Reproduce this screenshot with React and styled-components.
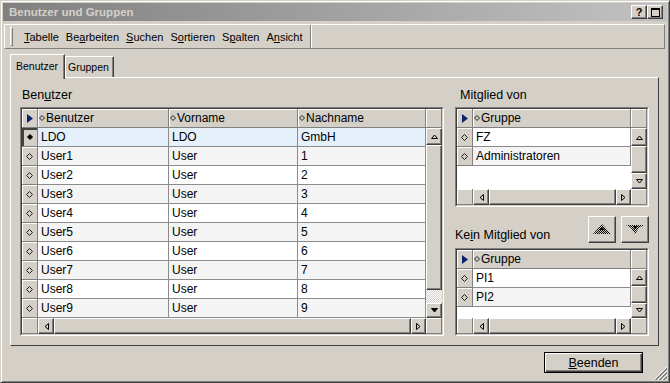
import React from "react";
import styled, { createGlobalStyle } from "styled-components";

const FACE = "#d4d0c8";
const SHADOW = "#808080";
const DARK = "#404040";
const SELECTED = "#e5f0fb";
const STRIPE = "#f4f4f4";

const GlobalStyle = createGlobalStyle`
  html, body {
    margin: 0;
    padding: 0;
    background: ${FACE};
  }
  body {
    font-family: "Liberation Sans", Arial, sans-serif;
    color: #000;
  }
  * {
    box-sizing: border-box;
  }
`;

const Window = styled.div`
  width: 670px;
  height: 383px;
  display: flex;
  flex-direction: column;
  background: ${FACE};
  border: 1px solid;
  border-color: ${FACE} ${DARK} ${DARK} ${FACE};
  box-shadow: inset 1px 1px #fff, inset -1px -1px ${SHADOW};
  padding: 2px;
`;

const TitleBar = styled.div`
  flex: none;
  height: 18px;
  display: flex;
  align-items: center;
  justify-content: space-between;
  padding: 0 4px 0 6px;
  background: linear-gradient(to right, #808080, #c2c2c2);
`;

const TitleText = styled.span`
  font-size: 11.5px;
  font-weight: bold;
  color: ${FACE};
`;

const CaptionButtons = styled.div`
  display: flex;
`;

const CaptionButton = styled.div`
  width: 16px;
  height: 14px;
  display: flex;
  align-items: center;
  justify-content: center;
  background: ${FACE};
  border-top: 1px solid #fff;
  border-left: 1px solid #fff;
  border-right: 1px solid ${DARK};
  border-bottom: 1px solid ${DARK};
  box-shadow: inset -1px -1px ${SHADOW};
  font-size: 11px;
  font-weight: bold;
  line-height: 1;
`;

const MenuBar = styled.div`
  flex: none;
  height: 25px;
  margin: 3px 2px 0 1px;
  display: flex;
  border: 1px solid;
  border-color: #fff ${SHADOW} ${SHADOW} #fff;
`;

const ToolBand = styled.div`
  display: flex;
  align-items: center;
  gap: 7px;
  padding: 0 7px 0 5px;
  border-right: 1px solid ${SHADOW};
  box-shadow: 1px 0 #fff;
`;

const Grip = styled.div`
  width: 3px;
  height: 19px;
  margin-right: 4px;
  border-left: 1px solid #fff;
  border-top: 1px solid #fff;
  border-right: 1px solid ${SHADOW};
  border-bottom: 1px solid ${SHADOW};
`;

const MenuItem = styled.span`
  font-size: 11px;
  white-space: nowrap;
`;

const TabStrip = styled.div`
  flex: none;
  height: 23px;
  margin: 5px 0 0 7px;
  display: flex;
  align-items: flex-end;
  position: relative;
  z-index: 1;
`;

const Tab = styled.div`
  height: ${(p) => (p.$active ? 25 : 21)}px;
  margin-bottom: ${(p) => (p.$active ? -2 : 0)}px;
  padding: ${(p) => (p.$active ? "0 6px 2px 5px" : "0 4px 0 2px")};
  display: flex;
  align-items: center;
  font-size: 10.5px;
  background: ${FACE};
  border-top: 1px solid #fff;
  border-left: 1px solid #fff;
  border-right: 1px solid ${DARK};
  box-shadow: inset -1px 0 ${SHADOW};
`;

const Panel = styled.div`
  flex: none;
  height: 269px;
  margin: 0 8px 0 7px;
  padding: 9px;
  display: flex;
  gap: 11px;
  border: 1px solid;
  border-color: #fff ${DARK} ${DARK} #fff;
`;

const Section = styled.div`
  width: ${(p) => p.$w}px;
  flex: none;
  display: flex;
  flex-direction: column;
`;

const GroupLabel = styled.div`
  height: 20px;
  flex: none;
  padding-left: ${(p) => p.$indent}px;
  font-size: 12.5px;
  line-height: 16px;
  white-space: nowrap;
`;

const MoveRow = styled.div`
  height: 41px;
  flex: none;
  display: flex;
  align-items: flex-end;
  padding-bottom: 5px;
  gap: 5px;
`;

const MoveLabel = styled.div`
  flex: 1;
  font-size: 12.5px;
  line-height: 16px;
  white-space: nowrap;
`;

const MoveButton = styled.div`
  width: 28px;
  height: 27px;
  display: flex;
  align-items: center;
  justify-content: center;
  background: ${FACE};
  border-top: 1px solid #fff;
  border-left: 1px solid #fff;
  border-right: 1px solid ${DARK};
  border-bottom: 1px solid ${DARK};
  box-shadow: inset -1px -1px ${SHADOW};
`;

const GridFrame = styled.div`
  width: ${(p) => p.$w}px;
  height: ${(p) => p.$h}px;
  flex: none;
  display: flex;
  border: 1px solid;
  border-color: ${SHADOW} #fff #fff ${SHADOW};
`;

const GridBox = styled.div`
  flex: 1;
  min-width: 0;
  display: flex;
  flex-direction: column;
  border: 1px solid;
  border-color: ${DARK} ${FACE} ${FACE} ${DARK};
  background: ${FACE};
`;

const GridBody = styled.div`
  flex: 1;
  min-height: 0;
  display: flex;
`;

const Table = styled.div`
  flex: 1;
  min-width: 0;
  display: flex;
  flex-direction: column;
  background: #fff;
  overflow: hidden;
`;

const Row = styled.div`
  flex: none;
  height: 19px;
  display: flex;
  background: ${(p) => p.$bg};
`;

const Indicator = styled.div`
  width: 16px;
  flex: none;
  display: flex;
  align-items: center;
  justify-content: center;
  background: ${FACE};
  border-right: 1px solid ${SHADOW};
  border-bottom: 1px solid ${SHADOW};
  box-shadow: ${(p) =>
    p.$current ? `inset 2px 2px ${DARK}` : "inset 1px 1px #fff"};
`;

const HeaderCell = styled.div`
  width: ${(p) => p.$w}px;
  flex: none;
  display: flex;
  align-items: center;
  gap: 1px;
  padding-left: 1px;
  font-size: 12px;
  background: ${FACE};
  border-right: 1px solid ${SHADOW};
  border-bottom: 1px solid ${SHADOW};
  box-shadow: inset 1px 1px #fff;
  white-space: nowrap;
  overflow: hidden;
`;

const Cell = styled.div`
  width: ${(p) => p.$w}px;
  flex: none;
  padding-left: 3px;
  font-size: 12px;
  line-height: 18px;
  border-right: 1px solid #8c8c8c;
  border-bottom: 1px solid #8c8c8c;
  white-space: nowrap;
  overflow: hidden;
`;

const VScroll = styled.div`
  width: 16px;
  flex: none;
  display: flex;
  flex-direction: column;
  background: ${FACE};
`;

const HScroll = styled.div`
  height: 16px;
  flex: none;
  display: flex;
  background: ${FACE};
`;

const Corner = styled.div`
  flex: none;
  width: ${(p) => (p.$w ? `${p.$w}px` : "auto")};
  height: ${(p) => (p.$h ? `${p.$h}px` : "auto")};
  background: ${FACE};
  border-right: 1px solid ${SHADOW};
  border-bottom: 1px solid ${SHADOW};
  box-shadow: inset 1px 1px #fff;
`;

const ScrollButton = styled.div`
  flex: none;
  width: ${(p) => (p.$w ? `${p.$w}px` : "auto")};
  height: ${(p) => (p.$h ? `${p.$h}px` : "auto")};
  display: flex;
  align-items: center;
  justify-content: center;
  background: ${FACE};
  border-top: 1px solid #fff;
  border-left: 1px solid #fff;
  border-right: 1px solid ${DARK};
  border-bottom: 1px solid ${DARK};
  box-shadow: inset -1px -1px ${SHADOW};
`;

const Thumb = styled.div`
  flex: 1;
  background: ${FACE};
  border-top: 1px solid #fff;
  border-left: 1px solid #fff;
  border-right: 1px solid ${DARK};
  border-bottom: 1px solid ${DARK};
  box-shadow: inset -1px -1px ${SHADOW};
`;

const Track = styled.div`
  flex: none;
  height: ${(p) => p.$h}px;
  background: repeating-conic-gradient(${FACE} 0 25%, #fff 0 50%) 0 0 / 2px
    2px;
`;

const Footer = styled.div`
  flex: 1;
  display: flex;
  justify-content: flex-end;
  align-items: flex-start;
`;

const PushButton = styled.div`
  width: 99px;
  height: 21px;
  margin-top: 6px;
  display: flex;
  align-items: center;
  justify-content: center;
  font-size: 12.5px;
  background: ${FACE};
  border: 1px solid #000;
  box-shadow: inset 1px 1px #fff, inset -1px -1px ${DARK},
    inset -2px -2px ${SHADOW};
`;

const SizeGrip = styled.div`
  align-self: flex-end;
  margin-left: 11px;
  width: 13px;
  height: 13px;
  display: flex;
`;

function Diamond({ filled, size = 7 }) {
  const h = size / 2;
  return (
    <svg width={size} height={size} viewBox={`0 0 ${size} ${size}`}>
      <path
        d={`M${h} 0.5 L${size - 0.5} ${h} L${h} ${size - 0.5} L0.5 ${h} Z`}
        fill={filled ? "#000" : "none"}
        stroke={filled ? "#000" : "#202020"}
        strokeWidth="1"
      />
    </svg>
  );
}

function HeadArrow() {
  return (
    <svg width="6" height="9" viewBox="0 0 6 9">
      <path d="M0 0 L6 4.5 L0 9 Z" fill="#0a246a" />
    </svg>
  );
}

const arrowPaths = {
  up: "M0.5 4.5 L3.5 1 L6.5 4.5 Z",
  down: "M0.5 0.5 L3.5 4 L6.5 0.5 Z",
  left: "M4.5 0.5 L1 3.5 L4.5 6.5 Z",
  right: "M0.5 0.5 L4 3.5 L0.5 6.5 Z",
};

function Arrow({ dir, filled }) {
  const horiz = dir === "left" || dir === "right";
  const w = horiz ? 5 : 7;
  const h = horiz ? 7 : 5;
  return (
    <svg width={w} height={h} viewBox={`0 0 ${w} ${h}`}>
      <path
        d={arrowPaths[dir]}
        fill={filled ? "#000" : "none"}
        stroke="#000"
        strokeWidth="1"
      />
    </svg>
  );
}

function MoveIcon({ up }) {
  const id = up ? "dither-up" : "dither-down";
  return (
    <svg width="20" height="11" viewBox="0 0 20 11">
      <defs>
        <pattern id={id} width="2" height="2" patternUnits="userSpaceOnUse">
          <rect width="1" height="1" fill="#000" />
          <rect x="1" y="1" width="1" height="1" fill="#000" />
        </pattern>
      </defs>
      <path
        d={up ? "M10 0 L19 10 L1 10 Z" : "M1 1 H19 L14 4 L10 10 L6 4 Z"}
        fill={`url(#${id})`}
      />
      <path
        d={up ? "M10 3 L13 6 L7 6 Z" : "M8 2 H12 L10 5 Z"}
        fill="#000"
      />
    </svg>
  );
}

function GripIcon() {
  return (
    <svg width="13" height="13" viewBox="0 0 13 13">
      {[0, 4, 8].map((o) => (
        <g key={o}>
          <line x1={13} y1={o} x2={o} y2={13} stroke="#fff" />
          <line x1={13} y1={o + 1} x2={o + 1} y2={13} stroke={SHADOW} />
          <line x1={13} y1={o + 2} x2={o + 2} y2={13} stroke={SHADOW} />
        </g>
      ))}
    </svg>
  );
}

function DataGrid({ width, height, columns, rows, selected, scroll }) {
  return (
    <GridFrame $w={width} $h={height}>
      <GridBox>
        <GridBody>
          <Table>
            <Row $bg={FACE}>
              <Indicator>
                <HeadArrow />
              </Indicator>
              {columns.map((col) => (
                <HeaderCell key={col.title} $w={col.width}>
                  <Diamond size={6} />
                  {col.title}
                </HeaderCell>
              ))}
            </Row>
            {rows.map((row, i) => {
              const isCurrent = i === selected;
              const bg = isCurrent ? SELECTED : i % 2 ? STRIPE : "#fff";
              return (
                <Row key={i} $bg={bg}>
                  <Indicator $current={isCurrent}>
                    <Diamond filled={isCurrent} size={isCurrent ? 6 : 7} />
                  </Indicator>
                  {row.map((value, j) => (
                    <Cell key={j} $w={columns[j].width}>
                      {value}
                    </Cell>
                  ))}
                </Row>
              );
            })}
          </Table>
          <VScroll>
            <Corner $h={19} />
            <ScrollButton $h={scroll.up}>
              <Arrow dir="up" />
            </ScrollButton>
            <Thumb />
            {scroll.track ? <Track $h={scroll.track} /> : null}
            <ScrollButton $h={scroll.down}>
              <Arrow dir="down" filled={scroll.filledDown} />
            </ScrollButton>
          </VScroll>
        </GridBody>
        <HScroll>
          <Corner $w={16} />
          <ScrollButton $w={16}>
            <Arrow dir="left" />
          </ScrollButton>
          <Thumb />
          <ScrollButton $w={15}>
            <Arrow dir="right" />
          </ScrollButton>
          <Corner $w={16} />
        </HScroll>
      </GridBox>
    </GridFrame>
  );
}

const userColumns = [
  { title: "Benutzer", width: 131 },
  { title: "Vorname", width: 129 },
  { title: "Nachname", width: 128 },
];

const users = [
  ["LDO", "LDO", "GmbH"],
  ...[1, 2, 3, 4, 5, 6, 7, 8, 9].map((n) => [`User${n}`, "User", `${n}`]),
];

const groupColumns = [{ title: "Gruppe", width: 158 }];

const memberOf = [["FZ"], ["Administratoren"]];
const notMemberOf = [["PI1"], ["PI2"]];

const menus = [
  ["", "T", "abelle"],
  ["Be", "a", "rbeiten"],
  ["", "S", "uchen"],
  ["S", "o", "rtieren"],
  ["S", "p", "alten"],
  ["A", "n", "sicht"],
];

export default function App() {
  return (
    <>
      <GlobalStyle />
      <Window>
        <TitleBar>
          <TitleText>Benutzer und Gruppen</TitleText>
          <CaptionButtons>
            <CaptionButton>?</CaptionButton>
            <CaptionButton>
              <svg width="9" height="9" viewBox="0 0 9 9">
                <rect x="0.5" y="0.5" width="8" height="8" fill="none" stroke="#000" />
                <line x1="0" y1="1.5" x2="9" y2="1.5" stroke="#000" />
              </svg>
            </CaptionButton>
          </CaptionButtons>
        </TitleBar>

        <MenuBar>
          <ToolBand>
            <Grip />
            {menus.map(([pre, key, post]) => (
              <MenuItem key={pre + key + post}>
                {pre}
                <u>{key}</u>
                {post}
              </MenuItem>
            ))}
          </ToolBand>
        </MenuBar>

        <TabStrip>
          <Tab $active>Benutzer</Tab>
          <Tab>Gruppen</Tab>
        </TabStrip>

        <Panel>
          <Section $w={424}>
            <GroupLabel $indent={2}>
              Ben<u>u</u>tzer
            </GroupLabel>
            <DataGrid
              width={424}
              height={229}
              columns={userColumns}
              rows={users}
              selected={0}
              scroll={{ up: 17, track: 13, down: 15, filledDown: true }}
            />
          </Section>
          <Section $w={194}>
            <GroupLabel $indent={5}>
              Mit<u>g</u>lied von
            </GroupLabel>
            <DataGrid
              width={194}
              height={100}
              columns={groupColumns}
              rows={memberOf}
              scroll={{ up: 18, down: 16 }}
            />
            <MoveRow>
              <MoveLabel>
                Ke<u>i</u>n Mitglied von
              </MoveLabel>
              <MoveButton>
                <MoveIcon up />
              </MoveButton>
              <MoveButton>
                <MoveIcon />
              </MoveButton>
            </MoveRow>
            <DataGrid
              width={194}
              height={88}
              columns={groupColumns}
              rows={notMemberOf}
              scroll={{ up: 17, down: 15 }}
            />
          </Section>
        </Panel>

        <Footer>
          <PushButton>
            <span>
              <u>B</u>eenden
            </span>
          </PushButton>
          <SizeGrip>
            <GripIcon />
          </SizeGrip>
        </Footer>
      </Window>
    </>
  );
}
